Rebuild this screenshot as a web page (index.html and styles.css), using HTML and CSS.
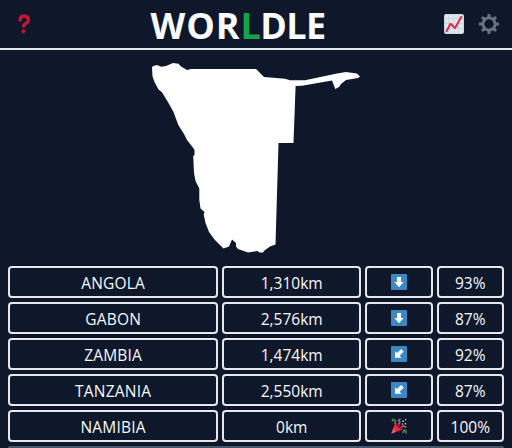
FILE: index.html
```html
<!DOCTYPE html>
<html lang="en">
<head>
<meta charset="utf-8">
<title>Worldle</title>
<link rel="stylesheet" href="styles.css">
</head>
<body>
<svg width="0" height="0" class="defs">
  <symbol id="down" viewBox="0 0 16 16"><rect width="16" height="16" rx="1" fill="#3b88c3"/><path d="M6 3h4v5h2.7L8 13.2 3.3 8H6z" fill="#fff"/></symbol>
  <symbol id="southwest" viewBox="0 0 16 16"><rect width="16" height="16" rx="1" fill="#3b88c3"/><path d="M4 5.2l2 1.9L10.1 3l2.6 2.6L8.6 9.8l2 2H4z" fill="#fff"/></symbol>
</svg>
<header class="header">
  <button class="icon help" aria-label="Help">
    <svg width="14" height="20" viewBox="0 0 14 20"><path d="M2 6C2.200 3.500 3.900 2.300 6.200 2.300c2.700 0 4.300 1.500 4.300 3.600 0 3.600-4.700 3-4.900 6.300" fill="none" stroke="#be1931" stroke-width="3.400" stroke-linecap="round"/><circle cx="5.500" cy="17.200" r="2" fill="#be1931"/></svg>
  </button>
  <h1 class="title"><span class="lead">WOR</span><span class="accent">L</span>DLE</h1>
  <button class="icon" aria-label="Statistics">
    <svg width="20" height="20" viewBox="0 0 20 20"><rect width="20" height="20" rx="2" fill="#ccd6dd"/><path d="M1 1h3v3H1zM5 1h4v3H5zM10 1h4v3h-4zM15 1h4v3h-4zM1 5h3v4H1zM5 5h4v4H5zM10 5h4v4h-4zM15 5h4v4h-4zM1 10h3v4H1zM5 10h4v4H5zM10 10h4v4h-4zM15 10h4v4h-4zM1 15h3v4H1zM5 15h4v4H5zM10 15h4v4h-4zM15 15h4v4h-4z" fill="#e1e8ed"/><path d="M2.500 17.200L6.500 9.800l4.600 4.300L17.400 2.800" fill="none" stroke="#dd2e44" stroke-width="2" stroke-linecap="round" stroke-linejoin="round"/></svg>
  </button>
  <button class="icon" aria-label="Settings">
    <svg width="20" height="20" viewBox="0 0 20 20" fill="none" stroke="#66757f"><circle cx="10" cy="10" r="6.100" stroke-width="2.900"/><path d="M10 0v4M10 16v4M0 10h4M16 10h4M3 3l2.800 2.800M14.200 14.200L17 17M3 17l2.800-2.800M14.200 5.800L17 3" stroke-width="3"/></svg>
  </button>
</header>
<main class="game">
  <svg class="country" width="212" height="192" viewBox="150 62 212 192" role="img" aria-label="Country outline">
    <path fill="#fff" d="M152 67.500L153 66L157 65L161 66.700L166 66L173 63L178.500 63.800L181 66.500L187 70L191 69H256L264 77L285 78.700L290 80.300L305 80.200L337 73.500L346 72L357 73.500L360 76.500L358 78L346 80L341 84L339 87L335.300 89L332 80.500L302 85.700L295.600 86L293.500 143H278.500L275.500 244.500L270 246.500L264.500 250.500L263 252.500H259.500L257.500 251L248 252.500L238 249L236 246.500V243L232 239.500L229 246.500L223.500 248.500L214.500 239.500L209 232L205.500 223L203.700 214.500L204.500 212L200.500 208.500L199.300 200V188.500L195.500 181L194 173L193.200 156L194.500 155V150L192.500 147L187 140L184 134L178.300 125L173.500 112L168.500 103L162 92.200L158.500 89.500L154.500 82L152.500 76.500Z"/>
  </svg>
  <section class="guesses">
    <div class="cell name">ANGOLA</div><div class="cell distance">1,310km</div><div class="cell symbol"><svg><use href="#down"/></svg></div><div class="cell">93%</div>
    <div class="cell name">GABON</div><div class="cell distance">2,576km</div><div class="cell symbol"><svg><use href="#down"/></svg></div><div class="cell">87%</div>
    <div class="cell name">ZAMBIA</div><div class="cell distance">1,474km</div><div class="cell symbol"><svg><use href="#southwest"/></svg></div><div class="cell">92%</div>
    <div class="cell name">TANZANIA</div><div class="cell distance">2,550km</div><div class="cell symbol"><svg><use href="#southwest"/></svg></div><div class="cell">87%</div>
    <div class="cell name">NAMIBIA</div><div class="cell distance">0km</div>
    <div class="cell symbol">
      <svg viewBox="0 0 16 16"><path d="M.3 15.700L4.200 5C7.500 5.300 10.800 8.500 11.500 11.400Z" fill="#dd2e44"/><path d="M.3 15.700L2.700 9.500l1.800 4.600z" fill="#ea596e"/><path d="M4.200 5c3 .2 6.700 3.400 7.300 6.400-3-.8-6.200-3.200-7.300-6.400z" fill="#a0041e"/><g fill="none" stroke-width="1.500"><path d="M.8 3.500l1.500-2.200L4.500 3l-.7 3.200M11.800 15l1.200-3 2 1v2.500" stroke="#5c913b"/><path d="M7.500 6.500L9 4 7.300 2.300 9.500.8M10.500 9l2-1 2.800 1.300" stroke="#9266cc"/></g><path d="M11.500 2.500h1.500v1.500h-1.500zM14 1h1.200v1.200H14zM13.800 5h1.400v1.400h-1.400zM10.800 5.500h1.300v1.300h-1.300z" fill="#ffcc4d"/></svg>
    </div>
    <div class="cell">100%</div>
  </section>
  <div class="answer"></div>
</main>
</body>
</html>
```
FILE: styles.css
```css
* { box-sizing: border-box; }
body {
  margin: 0;
  height: 448px;
  overflow: hidden;
  background: #0f172a;
  color: #f8fafc;
  font-family: "Open Sans", "Noto Sans", sans-serif;
}
.defs { display: none; }
.header {
  display: flex;
  align-items: center;
  height: 50px;
  padding: 0 13px 0 17px;
  border-bottom: 2px solid #e5e7eb;
}
.icon {
  display: flex;
  width: 20px;
  margin-right: 15px;
  padding: 0;
  border: 0;
  background: none;
}
.icon:last-child { margin-right: 0; }
.icon.help { width: 14px; margin: 0 0 0 1px; }
.title {
  flex: 1;
  margin: 0;
  padding: 3px 0 0;
  text-align: center;
  font-size: 36px;
  line-height: 40px;
  font-weight: 700;
  letter-spacing: -0.6px;
  white-space: nowrap;
}
.lead { letter-spacing: 0.9px; }
.accent { color: #16a34a; }
.game { padding: 12px 8px 0; }
.country { display: block; margin: 0 auto 12px; }
.guesses {
  display: grid;
  grid-template-columns: repeat(7, 1fr);
  grid-auto-rows: 32px;
  gap: 4px;
}
.cell {
  display: flex;
  justify-content: center;
  padding-top: 3px;
  border: 2px solid #e5e7eb;
  border-radius: 4px;
  font-size: 15.500px;
  line-height: 24px;
}
.name { grid-column: span 3; letter-spacing: 0.2px; }
.distance { grid-column: span 2; }
.symbol { padding-top: 6px; }
.symbol svg { width: 16px; height: 16px; }
.answer {
  height: 2px;
  margin-top: 4px;
  border-radius: 4px 4px 0 0;
  background: #475569;
}
```
